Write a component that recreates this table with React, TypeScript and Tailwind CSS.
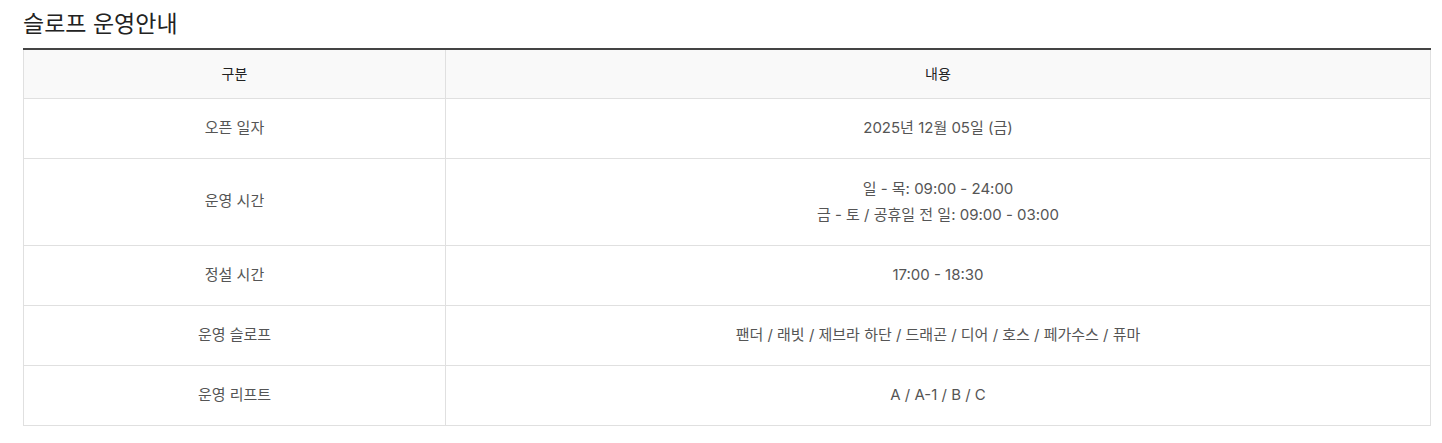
const rows: { label: string; content: string[] }[] = [
  { label: '오픈 일자', content: ['2025년 12월 05일 (금)'] },
  { label: '운영 시간', content: ['일 - 목: 09:00 - 24:00', '금 - 토 / 공휴일 전 일: 09:00 - 03:00'] },
  { label: '정설 시간', content: ['17:00 - 18:30'] },
  { label: '운영 슬로프', content: ['팬더 / 래빗 / 제브라 하단 / 드래곤 / 디어 / 호스 / 페가수스 / 퓨마'] },
  { label: '운영 리프트', content: ['A / A-1 / B / C'] },
];

export default function App() {
  return (
    <div
      className="min-h-screen bg-white pl-[23px] pt-[7px]"
      style={{ fontFamily: 'Inter, "Noto Sans CJK KR", sans-serif' }}
    >
      {/* Title */}
      <h2 className="text-[23px] leading-[34px] text-[#222]">슬로프 운영안내</h2>

      {/* Table */}
      <table className="mt-[7px] w-[1408px] border-collapse border-t-2 border-t-[#444] text-[15px] text-[#555]">
        <thead>
          <tr className="bg-[#f9f9f9]">
            <th className="h-[49px] w-[422px] border border-t-0 border-[#e0e0e0] text-[14px] font-normal text-[#222]">구분</th>
            <th className="h-[49px] border border-t-0 border-[#e0e0e0] text-[14px] font-normal text-[#222]">내용</th>
          </tr>
        </thead>
        <tbody>
          {rows.map((row) => (
            <tr key={row.label}>
              <td className="h-[60px] border border-[#e0e0e0] text-center">{row.label}</td>
              <td className="border border-[#e0e0e0] py-[16px] text-center leading-[26px] has-[div+div]:py-[17px]">
                {row.content.map((line) => (
                  <div key={line}>{line}</div>
                ))}
              </td>
            </tr>
          ))}
        </tbody>
      </table>
    </div>
  );
}
